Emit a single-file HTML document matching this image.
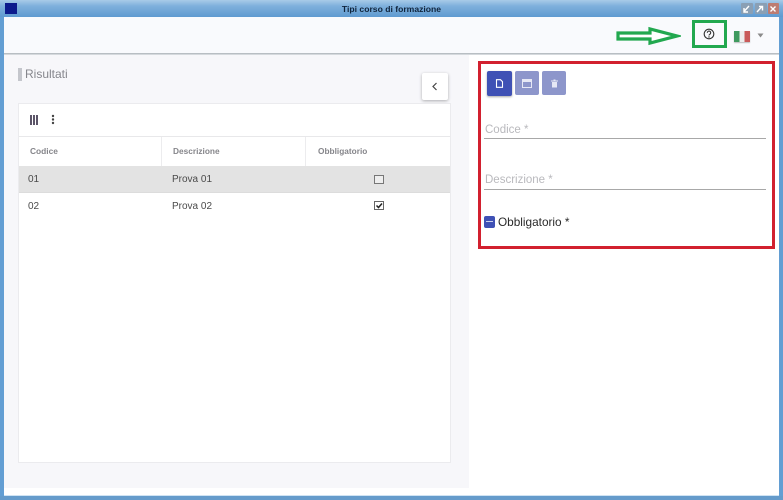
<!DOCTYPE html>
<html><head><meta charset="utf-8"><style>
html,body{margin:0;padding:0}
body{width:783px;height:500px;position:relative;overflow:hidden;background:#fff;font-family:"Liberation Sans",sans-serif}
#w{position:absolute;left:0;top:0;width:783px;height:500px;overflow:hidden;filter:blur(.35px)}
div,svg{position:absolute;box-sizing:border-box}
.t{white-space:nowrap;line-height:14px}
</style></head><body><div id="w">
<div style="left:0;top:0;width:783px;height:17px;background:linear-gradient(#a9cbe8,#7fb0dc 35%,#5f9ad0)"></div>
<div style="left:0;top:17px;width:4px;height:483px;background:#639ed3"></div>
<div style="left:779px;top:17px;width:4px;height:483px;background:#639ed3"></div>
<div style="left:0;top:496px;width:783px;height:4px;background:#659bcb"></div>
<div style="left:4px;top:495px;width:775px;height:1px;background:#cfe3f3"></div>
<div style="left:5px;top:3px;width:12px;height:11px;background:#0c1a8c"></div>
<div class="t" style="left:0;top:2px;width:783px;text-align:center;font-size:8.600px;font-weight:bold;color:#10243c;line-height:14px">Tipi corso di formazione</div>
<div style="left:741px;top:3px;width:12px;height:11px;background:#8a9fb4;border-radius:1px"></div>
<div style="left:755px;top:3px;width:12px;height:11px;background:#8a9fb4;border-radius:1px"></div>
<div style="left:768px;top:3px;width:11px;height:11px;background:#bd7c72;border-radius:1px"></div>
<svg style="left:741px;top:4px" width="38" height="10" viewBox="0 0 38 10"><path d="M8 2L3 7.500M3 4v4h4M16 8l5-5.500M18 2.500h3.500v4M29.500 2.500l5 5M34.500 2.500l-5 5" stroke="#fff" stroke-width="1.400" fill="none"/></svg>
<div style="left:4px;top:17px;width:775px;height:36px;background:#f9fafd"></div>
<div style="left:4px;top:53px;width:775px;height:2px;background:linear-gradient(#aab0b6,#e4e6ea)"></div>
<div style="left:4px;top:55px;width:465px;height:433px;background:#f7f7fa"></div>
<svg style="left:615px;top:26px" width="66" height="20" viewBox="0 0 66 20"><path d="M3 7H35V3L62 10 35 17V13H3Z" fill="#fff" stroke="#22a84f" stroke-width="3.200"/></svg>
<div style="left:692px;top:20px;width:35px;height:28px;border:3px solid #22a84f"></div>
<svg style="left:703px;top:28px" width="12" height="12" viewBox="0 0 12 12"><circle cx="6" cy="6" r="4.800" fill="none" stroke="#333" stroke-width="1.100"/><path d="M4.300 4.800a1.700 1.700 0 1 1 2.600 1.400c-.6.400-.9.600-.9 1.300" fill="none" stroke="#333" stroke-width="1.100"/><circle cx="6" cy="9" r=".7" fill="#333"/></svg>
<div style="left:734px;top:31px;width:16px;height:11px;background:linear-gradient(90deg,#3f9a5f 33%,#eeeeee 33%,#eeeeee 66%,#c95a5a 66%);box-shadow:0 1px 1px rgba(0,0,0,.25)"></div>
<svg style="left:757px;top:33px" width="7" height="5" viewBox="0 0 7 5"><path d="M.5 .5h6L3.500 4.500Z" fill="#8a8a8a"/></svg>

<div style="left:18px;top:68px;width:4px;height:13px;background:#c4c6cc"></div>
<div class="t" style="left:25px;top:67px;font-size:12px;color:#85868c">Risultati</div>
<div style="left:422px;top:73px;width:26px;height:27px;background:#fff;box-shadow:0 1px 3px rgba(0,0,0,.3);border-radius:2px"></div>
<svg style="left:431px;top:82px" width="8" height="9" viewBox="0 0 8 9"><path d="M5.500 1L2 4.500 5.500 8" fill="none" stroke="#444" stroke-width="1.200"/></svg>

<div style="left:18px;top:103px;width:433px;height:360px;background:#fff;border:1px solid #ebebee"></div>
<svg style="left:29px;top:114px" width="30" height="12" viewBox="0 0 30 12"><path d="M1 1h2v10H1zM4 1h2v10H4zM7 1h2v10H7z" fill="#5c5568"/><circle cx="24" cy="2" r="1.200" fill="#444"/><circle cx="24" cy="5.500" r="1.200" fill="#444"/><circle cx="24" cy="9" r="1.200" fill="#444"/></svg>
<div style="left:19px;top:136px;width:431px;height:1px;background:#e8e8ea"></div>
<div style="left:161px;top:137px;width:1px;height:29px;background:#ececee"></div>
<div style="left:305px;top:137px;width:1px;height:29px;background:#ececee"></div>
<div class="t" style="left:30px;top:144px;font-size:8.400px;font-weight:bold;color:#85858a">Codice</div>
<div class="t" style="left:173px;top:144px;font-size:8.300px;font-weight:bold;color:#85858a">Descrizione</div>
<div class="t" style="left:318px;top:144px;font-size:8.300px;font-weight:bold;color:#85858a">Obbligatorio</div>
<div style="left:19px;top:166px;width:431px;height:26px;background:#e3e3e3"></div>
<div style="left:19px;top:192px;width:431px;height:1px;background:#dcdcdc"></div>
<div class="t" style="left:28px;top:173px;font-size:10px;color:#4a4a4a">01</div>
<div class="t" style="left:172px;top:173px;font-size:10px;color:#4a4a4a">Prova 01</div>
<div class="t" style="left:28px;top:200px;font-size:10px;color:#4a4a4a">02</div>
<div class="t" style="left:172px;top:200px;font-size:10px;color:#4a4a4a">Prova 02</div>
<div style="left:374px;top:175px;width:10px;height:9px;border:1px solid #777;background:#eee"></div>
<div style="left:374px;top:201px;width:10px;height:9px;border:1px solid #666;background:#fff"></div>
<svg style="left:375px;top:201px" width="9" height="9" viewBox="0 0 9 9"><path d="M1.500 4.500l2 2 3.500-4" fill="none" stroke="#222" stroke-width="1.500"/></svg>

<div style="left:478px;top:61px;width:297px;height:188px;border:3px solid #d2202f"></div>
<div style="left:487px;top:71px;width:25px;height:25px;background:#3f51b5;border-radius:2px;box-shadow:0 1px 2px rgba(0,0,0,.35)"></div>
<div style="left:515px;top:71px;width:24px;height:24px;background:#8d96cb;border-radius:2px"></div>
<div style="left:542px;top:71px;width:24px;height:24px;background:#8d96cb;border-radius:2px"></div>
<svg style="left:495px;top:79px" width="9" height="9" viewBox="0 0 9 9"><path d="M1.500 .700H5.500L7.500 2.700V8.300H1.500Z" fill="none" stroke="#fff" stroke-width="1.100"/></svg>
<svg style="left:522px;top:79px" width="10" height="9" viewBox="0 0 10 9"><path d="M.500 .500H9.500V8.500H.500Z" fill="none" stroke="#e6e8f5" stroke-width="1"/><path d="M1 1H9V3H1Z" fill="#e6e8f5"/></svg>
<svg style="left:550px;top:79px" width="9" height="9" viewBox="0 0 9 9"><path d="M1 1.500H8V2.500H1ZM3.500 .500H5.500V1.500H3.500ZM2 3H7V8.500H2Z" fill="#e6e8f5"/></svg>
<div class="t" style="left:485px;top:123px;font-size:11.500px;color:#b9b9bd">Codice *</div>
<div style="left:484px;top:138px;width:282px;height:1px;background:#a8a8a8"></div>
<div class="t" style="left:485px;top:173px;font-size:11.500px;color:#b9b9bd">Descrizione *</div>
<div style="left:484px;top:189px;width:282px;height:1px;background:#a8a8a8"></div>
<div style="left:484px;top:216px;width:11px;height:12px;background:#3f51b5;border-radius:2px"></div>
<div style="left:486px;top:221px;width:7px;height:1px;background:#cdd2ee"></div>
<div class="t" style="left:498px;top:215px;font-size:11.800px;color:#2a2a2a">Obbligatorio *</div>
</div></body></html>
